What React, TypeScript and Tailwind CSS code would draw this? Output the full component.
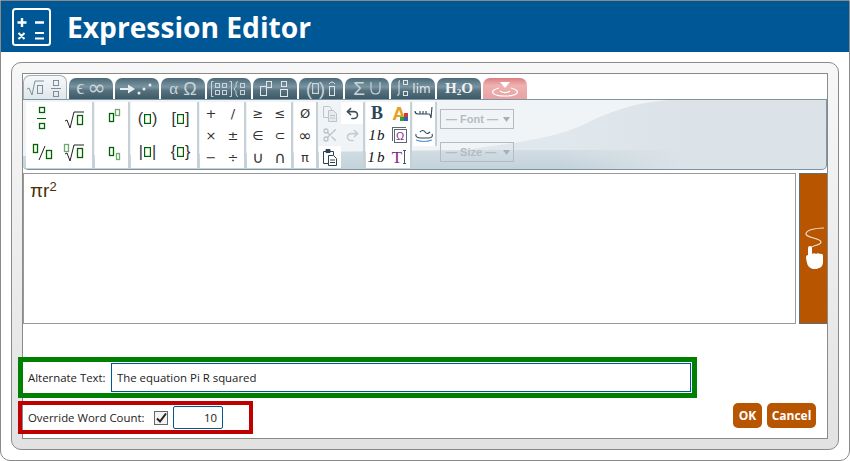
import React from "react";
import { Scissors, Undo2, Redo2 } from "lucide-react";

const D = "#006400";
const L = "#6fa86f";

function Cell({ children, className = "" }: { children?: React.ReactNode; className?: string }) {
  return <div className={"flex items-center justify-center " + className}>{children}</div>;
}

function Ph({ w = 7, h = 10, c = D }: { w?: number; h?: number; c?: string }) {
  return (
    <svg width={w} height={h} className="shrink-0">
      <rect x="0.6" y="0.6" width={w - 1.2} height={h - 1.2} fill="none" stroke={c} strokeWidth="1.2" />
    </svg>
  );
}

function I({ children, w = 33, h = 33 }: { children: React.ReactNode; w?: number; h?: number }) {
  return (
    <svg width={w} height={h} viewBox={`0 0 ${w} ${h}`} fill="none">
      {children}
    </svg>
  );
}

function R({ x, y, w, h, c = D }: { x: number; y: number; w: number; h: number; c?: string }) {
  return <rect x={x + 0.5} y={y + 0.5} width={w - 1} height={h - 1} stroke={c} strokeWidth="1.3" />;
}

function Group({ w, children, className = "" }: { w: string; children?: React.ReactNode; className?: string }) {
  return <div className={"relative h-[66px] bg-white shadow-[2px_0_0_0_#c6d1d7] shrink-0 " + w + " " + className}>{children}</div>;
}

function Tab({ children, active, pink }: { children: React.ReactNode; active?: boolean; pink?: boolean }) {
  const bg = active
    ? "h-[24px] border border-b-0 border-[#9fb0b9] bg-[linear-gradient(#f6f8f9,#dfe7eb)] text-[#7f8f97]"
    : pink
      ? "h-[21px] bg-[linear-gradient(#d97f82,#eeb1b1_35%,#e9a3a4)] text-white"
      : "h-[21px] bg-[linear-gradient(#4a6877,#7a95a1_42%,#57717e_60%,#3d5a68)] text-[#c9d5da]";
  return (
    <div className={"w-[44px] rounded-t-[7px] flex items-center justify-center gap-[3px] shrink-0 font-['DejaVu_Sans',sans-serif] " + bg}>
      {children}
    </div>
  );
}

function Sym({ s, big }: { s: string; big?: boolean }) {
  return (
    <Cell className={"pt-[1px] leading-none font-['DejaVu_Sans',sans-serif] text-[#333] " + (big ? "text-[16px]" : "text-[13px]")}>
      {s}
    </Cell>
  );
}

function Bracket({ l, r }: { l: string; r: string }) {
  return (
    <Cell className="gap-[1px] text-[16px] leading-none font-['Liberation_Sans',sans-serif] text-[#333]">
      <span>{l}</span>
      <Ph />
      <span>{r}</span>
    </Cell>
  );
}

function Sel({ label }: { label: string }) {
  return (
    <div className="w-[74px] h-[20px] border border-[#b4bcc2] flex items-center pl-[5px] text-[11px] font-bold text-[#b5bbbf] font-['Liberation_Sans',sans-serif] whitespace-nowrap">
      <span>— {label} —</span>
      <svg width="7" height="5" className="ml-auto mr-[3px] shrink-0"><path d="M0 0h7L3.500 5z" fill="#a8aeb2" /></svg>
    </div>
  );
}

export default function App() {
  return (
    <div className="w-[850px] h-[461px] bg-white border border-[#8a8a8a] rounded-b-[10px] overflow-hidden flex flex-col font-['Open_Sans',sans-serif]">
      <header className="h-[51px] shrink-0 bg-[#005796] flex items-center pl-[11px] gap-[16px] border-t border-[#005796]">
        <svg width="39" height="39" viewBox="0 0 39 39" fill="none" stroke="#fff" strokeWidth="2">
          <rect x="1" y="1" width="37" height="36" rx="2.500" />
          <path d="M10 10v9M5.500 14.500h9M23 14.500h9" strokeWidth="2.400" />
          <path d="M6.500 25l6 6M12.500 25l-6 6M23 25h9M23 30.500h9" strokeWidth="2" />
        </svg>
        <h1 className="text-[28.200px] leading-none font-bold text-white">Expression Editor</h1>
      </header>

      <main className="flex-1 pt-[10px] pl-[10px] pr-[10px]">
        <div className="w-[828px] h-[388px] border border-[#8a8a8a] rounded-[10px] p-[10px] bg-[linear-gradient(#f7f7f7,#e2e2e2)]">
          <div className="h-full bg-white border border-[#8a8a8a] flex flex-col">
            <div className="h-[25px] flex items-end gap-[2px] shrink-0 text-[14px]">
              <Tab active>
                <svg width="38" height="20" viewBox="0 0 38 20" fill="none" stroke="#7f8f97">
                  <path d="M1 11l2-1 3 7 3-14h9" />
                  <rect x="11.500" y="7.500" width="5" height="8" />
                  <rect x="27.500" y="2.500" width="5" height="5" />
                  <path d="M25 10.500h10" />
                  <rect x="27.500" y="13.500" width="5" height="5" />
                </svg>
              </Tab>
              <Tab>
                <span className="text-[20px] leading-none -mt-[3px] font-['Liberation_Serif',serif]">ϵ</span>
                <span className="text-[22px] leading-none -mt-[2px]">∞</span>
              </Tab>
              <Tab>
                <svg width="34" height="14" viewBox="0 0 34 14" fill="#e6edf0">
                  <path d="M0 6h8V2.500L15 7l-7 4.500V8H0z" />
                  <circle cx="19" cy="11" r="1.500" /><circle cx="24" cy="7" r="1.500" /><circle cx="30" cy="3" r="1.500" />
                </svg>
              </Tab>
              <Tab>
                <span className="text-[17px] leading-none font-['Liberation_Serif',serif]">α</span>
                <span className="ml-[2px] text-[18px] leading-none font-['Liberation_Sans',sans-serif]">Ω</span>
              </Tab>
              <Tab>
                <svg width="36" height="18" viewBox="0 0 36 18" fill="none" stroke="#c9d5da">
                  <path d="M2.500 1.500h-2v15h2M18.500 1.500h2v15h-2" />
                  <rect x="4.500" y="3.500" width="4" height="4" /><rect x="11.500" y="3.500" width="4" height="4" />
                  <rect x="4.500" y="10.500" width="4" height="4" /><rect x="11.500" y="10.500" width="4" height="4" />
                  <path d="M27 1.500q-2 0-2 3v2l-2 2.500 2 2.500v2q0 3 2 3" />
                  <rect x="29.500" y="3.500" width="4" height="4" /><rect x="29.500" y="10.500" width="4" height="4" />
                </svg>
              </Tab>
              <Tab>
                <svg width="30" height="18" viewBox="0 0 30 18" fill="none" stroke="#dfe7ea">
                  <rect x="0.500" y="6.500" width="6" height="9" /><rect x="6.500" y="1.500" width="5" height="6" />
                  <rect x="21.500" y="1.500" width="5" height="5" /><rect x="20.500" y="9.500" width="7" height="7" />
                </svg>
              </Tab>
              <Tab>
                <span className="flex items-center text-[18px] leading-none font-['Liberation_Sans',sans-serif]">(<Ph w={7} h={11} c="#c9d5da" />)</span>
                <svg width="8" height="17" viewBox="0 0 8 17" fill="none" stroke="#dfe7ea"><path d="M1 4q3-4 6 0" /><rect x="1.500" y="6.500" width="5" height="9" /></svg>
              </Tab>
              <Tab>
                <span className="text-[19px] leading-none font-['Liberation_Sans',sans-serif]">Σ</span>
                <svg width="11" height="13" viewBox="0 0 11 13" fill="none" stroke="#c9d5da" strokeWidth="1.200" className="ml-[2px]"><path d="M1 0v7q0 5 4.500 5T10 7V0" /></svg>
              </Tab>
              <Tab>
                <svg width="14" height="19" viewBox="0 0 14 19" fill="none" stroke="#dfe7ea">
                  <path d="M5 2q-1-1-1 1v12q0 2-2 1" />
                  <rect x="8.500" y="1.500" width="4" height="4" /><rect x="8.500" y="12.500" width="4" height="4" />
                </svg>
                <span className="text-[12px] leading-none text-[#e3eaed]">lim</span>
              </Tab>
              <Tab>
                <span className="text-[15px] leading-none font-bold text-[#eef2f4] font-['Liberation_Serif',serif]">
                  H<sub className="text-[9px]">2</sub>O
                </span>
              </Tab>
              <Tab pink>
                <svg width="30" height="16" viewBox="0 0 30 16" fill="none" stroke="#fff" strokeWidth="1.200">
                  <path d="M10 1h10l-5 6z" fill="#fff" stroke="none" />
                  <path d="M9 7c-11 3-7 8 6 8s17-5 6-8" />
                  <path d="M10 10c3 2 7 2 10 0" />
                </svg>
              </Tab>
            </div>

            <section className="relative h-[71px] shrink-0 border-y border-[#7c95a3] border-r rounded-b-[5px] bg-[#dbe3e9] overflow-hidden flex items-start gap-[3px] pl-[3px] pt-[2px]">
              <svg className="absolute left-0 top-0" width="804" height="70" viewBox="0 0 804 70">
                <defs>
                  <linearGradient id="ribbonLow" x1="0" y1="0" x2="0" y2="1">
                    <stop offset="0" stopColor="#e2e9ee" />
                    <stop offset="1" stopColor="#c2d1d9" />
                  </linearGradient>
                  <linearGradient id="ribbonFade" x1="0" y1="0" x2="1" y2="0">
                    <stop offset="0" stopColor="#dbe3e9" stopOpacity="0" />
                    <stop offset="1" stopColor="#dbe3e9" />
                  </linearGradient>
                </defs>
                <rect x="0" y="30" width="660" height="40" fill="url(#ribbonLow)" />
                <rect x="400" y="0" width="260" height="50" fill="#e0e7ed" />
                <rect x="540" y="0" width="120" height="70" fill="url(#ribbonFade)" />
                <path d="M0 0H645C610 3 585 12 560 25 530 38 500 42 440 50L0 56Z" fill="#f1f4f6" />
              </svg>

              <Group w="w-[66px]" className="grid grid-cols-2 grid-rows-2">
                <I>
                  <R x={13} y={5} w={6} h={6} />
                  <path d="M11 16.500h9" stroke={D} />
                  <R x={13} y={21} w={6} h={6} />
                </I>
                <I>
                  <path d="M6 19l2-1 3 8 4-16h10" stroke="#222" />
                  <R x={18} y={13} w={6} h={10} />
                </I>
                <I>
                  <R x={7} y={9} w={5} h={9} />
                  <path d="M13 25L19 11" stroke="#222" />
                  <R x={20} y={15} w={6} h={9} />
                </I>
                <I>
                  <R x={5} y={9} w={5} h={8} c={L} />
                  <path d="M6 19l2-1 3 8 4-16h10" stroke="#222" />
                  <R x={18} y={13} w={6} h={10} />
                </I>
              </Group>

              <Group w="w-[33px]" className="grid grid-rows-2">
                <I>
                  <R x={14} y={11} w={5} h={9} />
                  <R x={20} y={7} w={5} h={7} c={L} />
                </I>
                <I>
                  <R x={14} y={12} w={5} h={9} />
                  <R x={21} y={18} w={4} h={7} c={L} />
                </I>
              </Group>

              <Group w="w-[66px]" className="grid grid-cols-2 grid-rows-2">
                <Bracket l="(" r=")" />
                <Bracket l="[" r="]" />
                <Bracket l="|" r="|" />
                <Bracket l="{" r="}" />
              </Group>

              <Group w="w-[44px]" className="grid grid-cols-2 grid-rows-3">
                {["+", "/", "×", "±", "−", "÷"].map((s) => <Sym key={s} s={s} />)}
              </Group>

              <Group w="w-[44px]" className="grid grid-cols-2 grid-rows-3">
                <Sym s="≥" />
                <Sym s="≤" />
                <Sym s="∈" />
                <Sym s="⊂" />
                <Sym s="∪" big />
                <Sym s="∩" big />
              </Group>

              <Group w="w-[22px]" className="grid grid-rows-3">
                <Sym s="Ø" />
                <Sym s="∞" big />
                <Sym s="π" />
              </Group>

              <div className="relative w-[44px] h-[66px] shrink-0 grid grid-cols-2 grid-rows-3 shadow-[2px_0_0_0_#c6d1d7]">
                <Cell>
                  <svg width="16" height="17" viewBox="0 0 16 17" fill="none" stroke="#bcc4c9">
                    <path d="M1.500 1.500h6l2 2v9h-8z" />
                    <path d="M6.500 5.500h5l3 3v8h-8z" fill="#e4eaee" />
                    <path d="M8 10.500h5M8 13h5" />
                  </svg>
                </Cell>
                <Cell className="bg-white"><Undo2 size={15} color="#3d4f5a" strokeWidth={2.500} /></Cell>
                <Cell><Scissors size={16} color="#bcc4c9" /></Cell>
                <Cell><Redo2 size={15} color="#c4ccd1" strokeWidth={2.500} /></Cell>
                <Cell className="bg-white">
                  <svg width="16" height="18" viewBox="0 0 16 18" fill="none" stroke="#2f4451">
                    <path d="M4 3.500H1.500v12h5M8 3.500h3.500v4" />
                    <path d="M4 4.500V1.500h4v3z" fill="#2f4451" />
                    <path d="M6.500 7.500h5l3 3v7h-8z" fill="#fff" />
                    <path d="M8 12h5M8 14.500h5" />
                  </svg>
                </Cell>
                <Cell />
              </div>

              <Group w="w-[44px]" className="grid grid-cols-2 grid-rows-3">
                <Cell className="text-[18px] leading-none font-bold text-[#2c4656] font-['Liberation_Serif',serif]">B</Cell>
                <Cell className="relative">
                  <span className="text-[19px] leading-none font-bold text-[#e8a020] font-['Liberation_Sans',sans-serif]">A</span>
                  <svg width="8" height="8" className="absolute right-[2px] bottom-[3px]">
                    <rect width="4" height="4" fill="#d63a2a" x="4" /><rect width="4" height="4" fill="#2f9e3f" y="4" /><rect width="4" height="4" fill="#2f5fc4" x="4" y="4" />
                  </svg>
                </Cell>
                <Cell className="text-[15px] leading-none italic text-[#111] tracking-[1px] font-['Liberation_Serif',serif]">1b</Cell>
                <Cell>
                  <span className="relative w-[13px] h-[14px] mt-[2px] ml-[2px] border border-[#5a6a74] flex items-center justify-center text-[11px] leading-none text-[#8a1f8a] font-['Liberation_Sans',sans-serif] before:absolute before:-left-[3px] before:-top-[3px] before:w-[14px] before:h-[14px] before:border-l before:border-t before:border-[#5a6a74]">Ω</span>
                </Cell>
                <Cell className="text-[15px] leading-none italic text-[#111] tracking-[2px] font-['Liberation_Serif',serif]">1b</Cell>
                <Cell className="text-[17px] leading-none text-[#8a1f8a] gap-[1px] font-['Liberation_Serif',serif]">
                  T<span className="w-[3px] h-[14px] border-y border-[#3a5a6a] relative before:absolute before:left-[1px] before:top-0 before:h-full before:w-px before:bg-[#3a5a6a]" />
                </Cell>
              </Group>

              <div className="relative w-[22px] h-[44px] bg-white shrink-0 flex flex-col shadow-[2px_0_0_0_#c6d1d7]">
                <Cell className="h-[22px]">
                  <svg width="20" height="16" viewBox="0 0 20 16" fill="none" stroke="#2c4656" strokeWidth="1.100">
                    <path d="M1 6q0 3 3 3h11q1 0 2 4l1-11" /><path d="M6 9V6M9 9V6M12 9V6" />
                  </svg>
                </Cell>
                <Cell className="h-[22px]">
                  <svg width="20" height="17" viewBox="0 0 20 17" fill="none" strokeWidth="1.100">
                    <path d="M2 7c-1 3 2 4 5 4h8c3 0 4-2 3-4" stroke="#2c4656" /><path d="M6 5q3-3 5 0t5 0" stroke="#2c4656" />
                    <path d="M2 13q8 3 16 0" stroke="#5b93c9" />
                  </svg>
                </Cell>
              </div>

              <div className="relative ml-[2px] pt-[7px] flex flex-col gap-[13px]">
                <Sel label="Font" />
                <Sel label="Size" />
              </div>
            </section>

            <div className="flex h-[151px] mt-[3px] shrink-0">
              <div className="w-[773px] h-full border border-[#999] px-[6px] pt-[5px] text-[19px] leading-[24px] text-[#4a3000] font-['Liberation_Sans',sans-serif]">
                πr<sup className="text-[13px]">2</sup>
              </div>
              <button className="ml-[3px] flex-1 bg-[#b85500] border border-[#5f6f78] border-r-0 flex items-center justify-center">
                <svg width="22" height="44" viewBox="0 0 22 44" fill="none">
                  <path d="M21 1C12 1 3 3 3 7s15 4 15 8-10 3-10 6" stroke="#f2e0d0" strokeWidth="1.200" />
                  <path d="M5 21q0-2 2-2t2 2v6c1-1 3-1 4 0 1-1 3-1 4 0 2-.5 3 .5 3 2v6c0 5-4 7-8 7s-7-2-8-6l-1-5q0-3 2-3z" fill="#fff" />
                </svg>
              </button>
            </div>

            <div className="-ml-[5px] mt-[33px] w-[679px] h-[41px] border-[5px] border-[#008000] flex items-center pl-[5px] pr-[1px] shrink-0">
              <span className="w-[83px] text-[11.400px] leading-none text-[#222] whitespace-nowrap">Alternate Text:</span>
              <input readOnly value="The equation Pi R squared" className="flex-1 h-[29px] border border-[#005796] px-[5px] text-[11.400px] text-[#222] outline-none" />
            </div>

            <div className="-ml-[5px] mt-[3px] pr-[11px] flex items-start justify-between shrink-0">
              <div className="w-[235px] h-[33px] border-[4px] border-[#c00000] flex items-center pl-[6px]">
                <span className="w-[126px] text-[11.400px] leading-none text-[#222] whitespace-nowrap">Override Word Count:</span>
                <span className="w-[14px] h-[14px] border border-[#666] bg-[#f3f3f3] flex items-center justify-center">
                  <svg width="12" height="12" viewBox="0 0 12 12" fill="none" stroke="#222" strokeWidth="2"><path d="M2 6.500l3 3 6-8" /></svg>
                </span>
                <input readOnly value="10" className="ml-[5px] w-[50px] h-[23px] border border-[#005796] rounded-[2px] px-[5px] text-right text-[11.400px] text-[#222] outline-none" />
              </div>
              <div className="flex gap-[5px] mt-[2px]">
                <button className="w-[29px] h-[25px] rounded-[5px] bg-[#b85500] text-white text-[12px] font-bold">OK</button>
                <button className="w-[49px] h-[25px] rounded-[5px] bg-[#b85500] text-white text-[12px] font-bold">Cancel</button>
              </div>
            </div>
          </div>
        </div>
      </main>
    </div>
  );
}
